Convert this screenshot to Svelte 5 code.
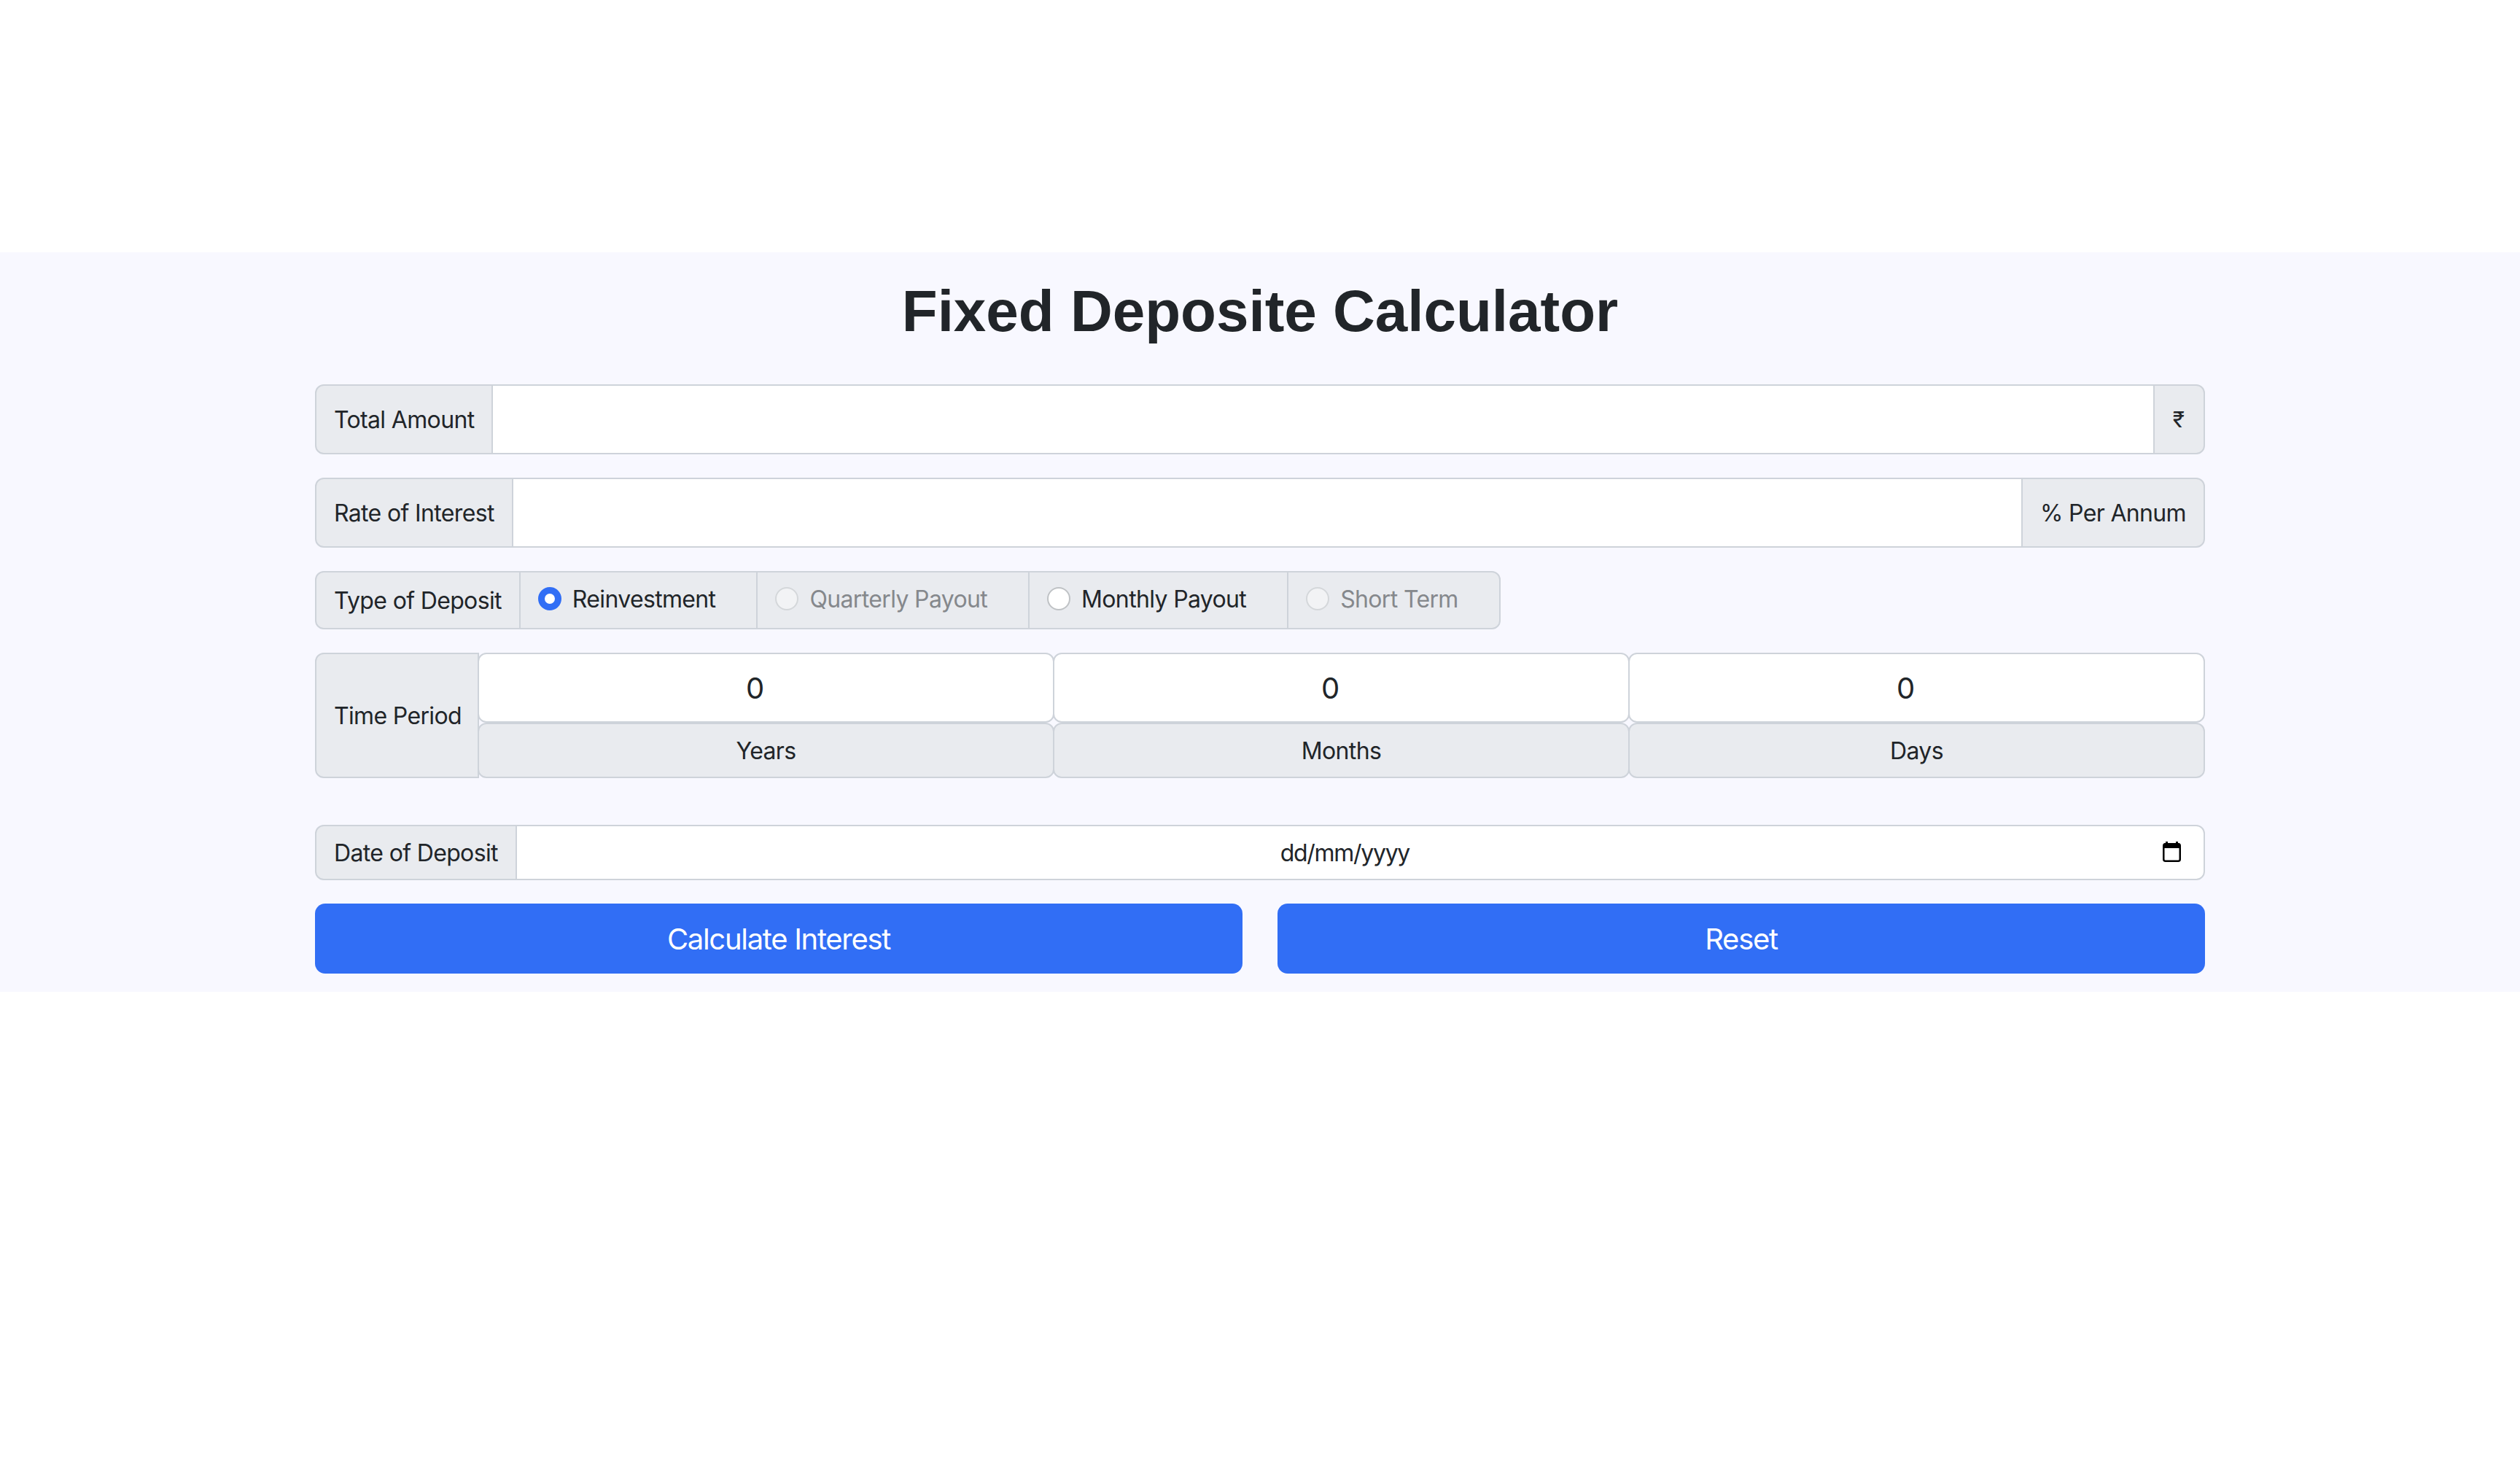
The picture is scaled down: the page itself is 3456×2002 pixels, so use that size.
<script>
let periods = [
  { name: "years", unit: "Years" },
  { name: "months", unit: "Months" },
  { name: "days", unit: "Days" },
];

let depositTypes = [
  { label: "Reinvestment", checked: true, disabled: false },
  { label: "Quarterly Payout", checked: false, disabled: true },
  { label: "Monthly Payout", checked: false, disabled: false },
  { label: "Short Term", checked: false, disabled: true },
];
</script>

<div class="spacer"></div>
<section class="band">
  <h1>Fixed Deposite Calculator</h1>

  <div class="group tall">
    <span class="addon first">Total Amount</span>
    <input class="field" type="text" />
    <span class="addon last rupee">₹</span>
  </div>

  <div class="group tall">
    <span class="addon first">Rate of Interest</span>
    <input class="field" type="text" />
    <span class="addon last">% Per Annum</span>
  </div>

  <div class="group type">
    <span class="addon first">Type of Deposit</span>
    {#each depositTypes as t, i}
      <label class="option" class:disabled={t.disabled} class:end={i === depositTypes.length - 1}>
        <input type="radio" name="deposit" checked={t.checked} disabled={t.disabled} />
        {t.label}
      </label>
    {/each}
  </div>

  <div class="group period">
    <span class="addon first">Time Period</span>
    {#each periods as p}
      <div class="cell">
        <input class="num" type="number" value="0" name={p.name} />
        <span class="unit">{p.unit}</span>
      </div>
    {/each}
  </div>

  <div class="group date">
    <span class="addon first">Date of Deposit</span>
    <div class="date-field">
      <span class="date-text">dd/mm/yyyy</span>
      <svg width="25" height="28" viewBox="0 0 25 28">
        <path d="M5.5 0v4M19.5 0v4" stroke="#000" stroke-width="3" />
        <rect x="1.25" y="3.25" width="22.5" height="23.5" rx="2.5" fill="#fff" stroke="#000" stroke-width="2.5" />
        <path d="M1 5a3 3 0 0 1 3-3h17a3 3 0 0 1 3 3v4H1z" fill="#000" />
      </svg>
    </div>
  </div>

  <div class="actions">
    <button type="button">Calculate Interest</button>
    <button type="button">Reset</button>
  </div>
</section>

<style>
:global(body) {
  margin: 0;
  background: #fff;
  color: #212529;
  font-family: Inter, "Noto Sans", sans-serif;
  font-size: 32px;
  letter-spacing: -0.65px;
}

.spacer {
  height: 346px;
}

.band {
  box-sizing: border-box;
  height: 1014px;
  padding: 0 432px;
  background: #f8f8ff;
}

h1 {
  margin: 0;
  height: 181px;
  padding-top: 35px;
  box-sizing: border-box;
  font-family: "Liberation Sans", Arial, sans-serif;
  font-size: 80px;
  font-weight: 700;
  letter-spacing: 0;
  line-height: 92px;
  text-align: center;
  color: #212529;
}

.group {
  display: flex;
  margin-bottom: 32px;
}

.tall {
  height: 96px;
}

.type {
  width: fit-content;
  height: 80px;
}

.period {
  height: 172px;
  margin-bottom: 64px;
}

.date {
  height: 76px;
}

.addon {
  display: flex;
  align-items: center;
  box-sizing: border-box;
  padding: 0 24px;
  border: 2px solid #ced3da;
  background: #e9ebef;
  white-space: nowrap;
}

.addon.first {
  border-radius: 12px 0 0 12px;
}

.addon.last {
  margin-left: -2px;
  border-radius: 0 12px 12px 0;
}

.addon.rupee {
  flex: none;
  justify-content: center;
  width: 71px;
  padding: 0 2px 0 0;
  font-size: 30px;
}

.field {
  flex: 1;
  min-width: 0;
  margin-left: -2px;
  box-sizing: border-box;
  border: 2px solid #ced3da;
  background: #fff;
  outline: 0;
}

.option {
  display: flex;
  align-items: center;
  gap: 15px;
  margin-left: -2px;
  padding: 0 56px 4px 24px;
  box-sizing: border-box;
  border: 2px solid #ced3da;
  background: #e9ebef;
  white-space: nowrap;
}

.option.end {
  border-radius: 0 12px 12px 0;
}

.option.disabled {
  color: #85888c;
}

.option input {
  appearance: none;
  width: 32px;
  height: 32px;
  margin: 0;
  border: 2px solid #bfc2c5;
  border-radius: 50%;
  background: #fff;
}

.option input:checked {
  border: 9.5px solid #316ef5;
}

.option input:disabled {
  background: #f2f3f5;
  border-color: #d4d7da;
}

.period .addon {
  width: 225px;
  flex: none;
}

.cell {
  flex: 1;
  min-width: 0;
  display: flex;
  flex-direction: column;
  margin-left: -2px;
}

.num {
  appearance: textfield;
  box-sizing: border-box;
  width: 100%;
  height: 96px;
  padding: 0 54px 0 24px;
  border: 2px solid #ced3da;
  border-radius: 12px;
  background: #fff;
  color: #212529;
  font: inherit;
  font-size: 40px;
  text-align: center;
  outline: 0;
}

.num::-webkit-inner-spin-button {
  appearance: none;
}

.unit {
  flex: 1;
  display: flex;
  align-items: center;
  justify-content: center;
  border: 2px solid #ced3da;
  border-radius: 12px;
  background: #e9ebef;
}

.date-field {
  flex: 1;
  display: flex;
  align-items: center;
  margin-left: -2px;
  padding: 0 31px 2px 24px;
  box-sizing: border-box;
  border: 2px solid #ced3da;
  border-radius: 0 12px 12px 0;
  background: #fff;
}

.date-text {
  flex: 1;
  margin-right: 10px;
  padding-top: 2px;
  letter-spacing: -1.3px;
  text-align: center;
}

.actions {
  display: flex;
  gap: 48px;
}

button {
  flex: 1;
  height: 96px;
  border: 0;
  border-radius: 14px;
  background: #316ef5;
  color: #fff;
  font: inherit;
  font-size: 40px;
  letter-spacing: -1.3px;
}
</style>
